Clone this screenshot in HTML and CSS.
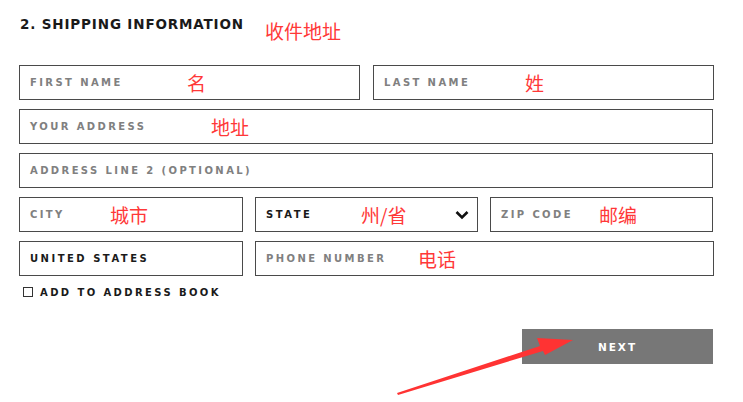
FILE: index.html
```html
<!DOCTYPE html>
<html lang="en">
<head>
<meta charset="utf-8">
<title>Shipping Information</title>
<link rel="stylesheet" href="styles.css">
</head>
<body>
<div class="page">
  <div class="heading">
    <h2 class="title">2. SHIPPING INFORMATION</h2>
    <span class="note note-title">收件地址</span>
  </div>
  <form class="form">
    <div class="row row-2">
      <div class="field"><span class="label">FIRST NAME</span><span class="note" style="left:167px">名</span></div>
      <div class="field"><span class="label">LAST NAME</span><span class="note" style="left:151px">姓</span></div>
    </div>
    <div class="row">
      <div class="field"><span class="label">YOUR ADDRESS</span><span class="note" style="left:191px">地址</span></div>
    </div>
    <div class="row">
      <div class="field"><span class="label">ADDRESS LINE 2 (OPTIONAL)</span></div>
    </div>
    <div class="row row-3">
      <div class="field"><span class="label">CITY</span><span class="note" style="left:90px">城市</span></div>
      <div class="field field-select"><span class="label label-dark">STATE</span><span class="note" style="left:105px">州/省</span>
        <svg class="chevron" width="14" height="10" viewBox="0 0 14 10"><path d="M1.5 2 L7 7.5 L12.5 2" fill="none" stroke="#111" stroke-width="2.6"/></svg>
      </div>
      <div class="field"><span class="label">ZIP CODE</span><span class="note" style="left:108px">邮编</span></div>
    </div>
    <div class="row row-country">
      <div class="field"><span class="label label-dark">UNITED STATES</span></div>
      <div class="field"><span class="label">PHONE NUMBER</span><span class="note" style="left:162px">电话</span></div>
    </div>
    <label class="check"><span class="box"></span><span class="check-text">ADD TO ADDRESS BOOK</span></label>
    <div class="actions">
      <button type="button" class="next">NEXT</button>
    </div>
  </form>
  <svg class="arrow" width="743" height="402" viewBox="0 0 743 402">
    <polygon points="397,393 540,346 537,338 573,340 545,355 543,351 398,395" fill="#f33"/>
  </svg>
</div>
</body>
</html>
```
FILE: styles.css
```css
html, body {
  margin: 0;
  padding: 0;
  background: #fff;
}
.page {
  position: relative;
  width: 743px;
  height: 402px;
  overflow: hidden;
  font-family: "DejaVu Sans", "Liberation Sans", sans-serif;
}
.heading {
  display: flex;
  align-items: flex-start;
  padding: 15px 0 0 20px;
  height: 50px;
  box-sizing: border-box;
}
.title {
  margin: 0;
  font-size: 13.5px;
  font-weight: bold;
  letter-spacing: 0.85px;
  color: #1a1a1a;
  line-height: 18px;
}
.note {
  font-family: "Noto Sans CJK SC", sans-serif;
  color: #ff3838;
  font-size: 19px;
  line-height: 22px;
}
.note-title {
  margin: 5px 0 0 21px;
}
.form {
  display: flex;
  flex-direction: column;
  gap: 9px;
  width: 694px;
  margin: 15px 0 0 19px;
}
.row {
  display: grid;
  grid-template-columns: 1fr;
  gap: 13px;
}
.row-2 { grid-template-columns: 341px 341px; }
.row-3 { grid-template-columns: 224px 223px 223px; gap: 12px; }
.row-country { grid-template-columns: 224px 459px; gap: 12px; }
.field {
  position: relative;
  height: 35px;
  box-sizing: border-box;
  border: 1px solid #4a4a4a;
  display: flex;
  align-items: center;
  padding: 0 10px;
}
.label {
  font-size: 10px;
  font-weight: bold;
  letter-spacing: 2.4px;
  color: #808080;
}
.label-dark { color: #1a1a1a; letter-spacing: 2.5px; }
.field .note {
  position: absolute;
  top: 6px;
}
.chevron {
  position: absolute;
  right: 8px;
  top: 12px;
}
.check {
  display: flex;
  align-items: center;
  gap: 7px;
  margin: 1px 0 0 4px;
  height: 12px;
}
.box {
  width: 8px;
  height: 8px;
  border: 1.5px solid #333;
}
.check-text {
  font-size: 10px;
  font-weight: bold;
  letter-spacing: 2.4px;
  color: #1a1a1a;
}
.actions {
  display: flex;
  justify-content: flex-end;
  margin-top: 22px;
}
.next {
  width: 191px;
  height: 35px;
  border: 0;
  background: #777;
  color: #fff;
  font-family: "DejaVu Sans", sans-serif;
  font-weight: bold;
  font-size: 10.5px;
  letter-spacing: 2px;
  padding: 0;
}
.arrow {
  position: absolute;
  left: 0;
  top: 0;
  pointer-events: none;
}
```
